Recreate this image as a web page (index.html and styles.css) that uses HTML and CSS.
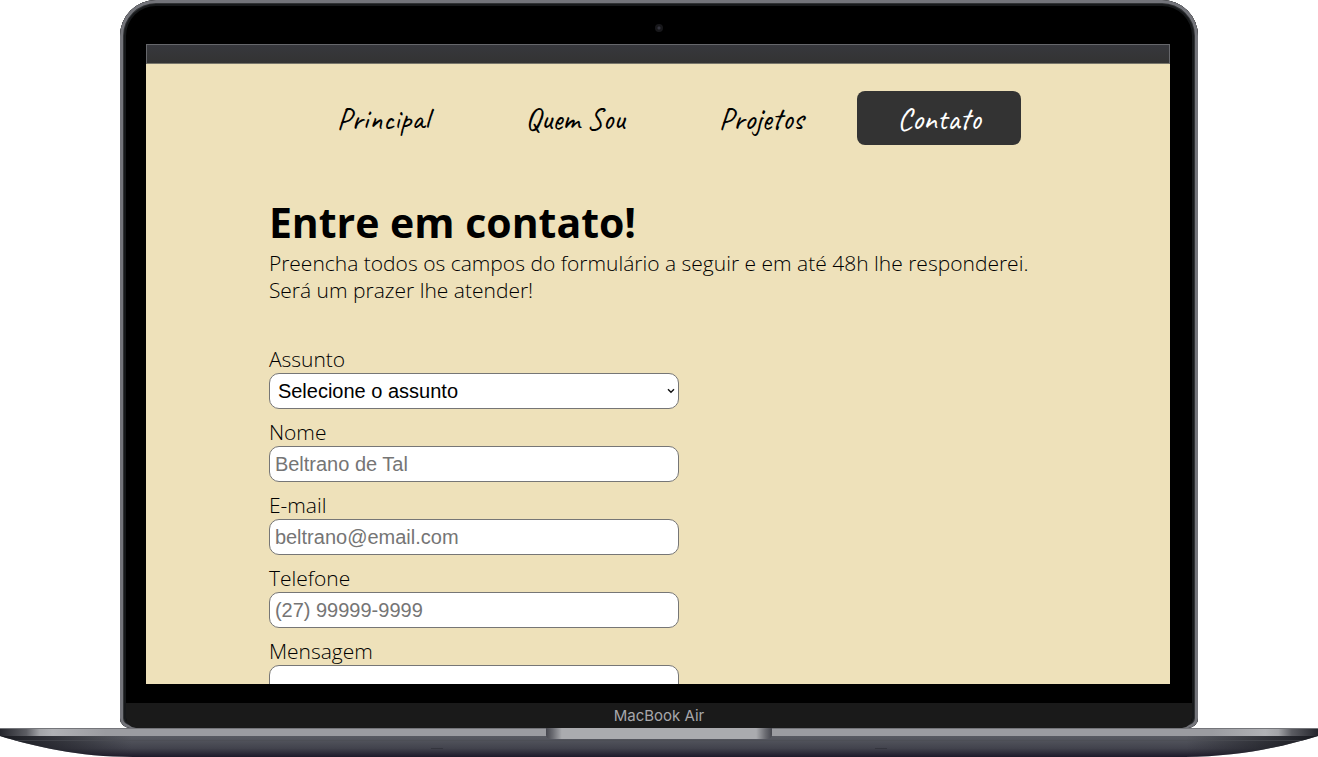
FILE: index.html
```html
<!DOCTYPE html>
<html lang="pt-BR">
<head>
<meta charset="utf-8">
<meta name="viewport" content="width=device-width, initial-scale=1">
<title>Contato</title>
<link rel="stylesheet" href="styles.css">
</head>
<body>
<div class="laptop">
  <div class="lid">
    <div class="camera"></div>
    <div class="screen">
      <div class="menubar"></div>
      <nav class="nav">
        <a class="nav-link" href="#principal">Principal</a>
        <a class="nav-link" href="#quem-sou">Quem Sou</a>
        <a class="nav-link" href="#projetos">Projetos</a>
        <a class="nav-link active" href="#contato" aria-current="page">Contato</a>
      </nav>
      <main class="content">
        <h1 class="title">Entre em contato!</h1>
        <p class="intro">Preencha todos os campos do formulário a seguir e em até 48h lhe responderei.<br>Será um prazer lhe atender!</p>
        <form class="form">
          <div class="field">
            <label for="assunto">Assunto</label>
            <div class="select-wrap">
              <select class="control select" id="assunto"><option>Selecione o assunto</option></select>
              <svg class="chevron" viewBox="0 0 8 6" aria-hidden="true"><path d="M1 1.2 4 4.2 7 1.2" fill="none" stroke="#111" stroke-width="1.4"/></svg>
            </div>
          </div>
          <div class="field">
            <label for="nome">Nome</label>
            <input class="control" id="nome" type="text" placeholder="Beltrano de Tal">
          </div>
          <div class="field">
            <label for="email">E-mail</label>
            <input class="control" id="email" type="email" placeholder="beltrano@email.com">
          </div>
          <div class="field">
            <label for="telefone">Telefone</label>
            <input class="control" id="telefone" type="tel" placeholder="(27) 99999-9999">
          </div>
          <div class="field">
            <label for="mensagem">Mensagem</label>
            <textarea class="control message" id="mensagem"></textarea>
          </div>
        </form>
      </main>
    </div>
    <div class="chin">MacBook Air</div>
  </div>
  <svg class="base" viewBox="0 0 1318 29" preserveAspectRatio="none" aria-hidden="true">
    <defs>
      <linearGradient id="under" x2="0" y2="1">
        <stop offset="0" stop-color="#66686d"/><stop offset=".35" stop-color="#55575f"/>
        <stop offset=".7" stop-color="#42434d"/><stop offset="1" stop-color="#1d1a2a"/>
      </linearGradient>
      <linearGradient id="edge">
        <stop offset="0" stop-color="#24252c"/><stop offset=".02" stop-color="#5c5d63"/>
        <stop offset=".03" stop-color="#a2a3a7"/><stop offset=".04" stop-color="#b0b1b5"/>
        <stop offset=".08" stop-color="#9b9ca1"/><stop offset=".92" stop-color="#9b9ca1"/>
        <stop offset=".96" stop-color="#b0b1b5"/><stop offset=".97" stop-color="#a2a3a7"/>
        <stop offset=".98" stop-color="#5c5d63"/><stop offset="1" stop-color="#24252c"/>
      </linearGradient>
      <linearGradient id="notch">
        <stop offset="0" stop-color="#45464e"/><stop offset=".03" stop-color="#6b6c72"/>
        <stop offset=".07" stop-color="#aaabaf"/><stop offset=".93" stop-color="#aaabaf"/>
        <stop offset=".97" stop-color="#6b6c72"/><stop offset="1" stop-color="#45464e"/>
      </linearGradient>
      <linearGradient id="tip">
        <stop offset="0" stop-color="#191a20"/><stop offset=".1" stop-color="#191a20" stop-opacity="0"/>
        <stop offset=".9" stop-color="#191a20" stop-opacity="0"/><stop offset="1" stop-color="#191a20"/>
      </linearGradient>
      <clipPath id="hull"><path d="M0 0H1318V8C1285 18 1240 29 1185 29H133C78 29 33 18 0 8Z"/></clipPath>
    </defs>
    <g clip-path="url(#hull)">
      <rect width="1318" height="29" fill="url(#under)"/>
      <rect y="8" width="1318" height="21" fill="url(#tip)"/>
      <rect width="1318" height="8" fill="url(#edge)"/>
      <path d="M0 .5H1318" stroke="#74757a"/>
      <path d="M0 12.5H1318" stroke="#4c4e54" opacity=".6"/>
      <path d="M546 0H772V7Q772 11 766 11H552Q546 11 546 7Z" fill="url(#notch)"/>
      <path d="M431 20.5h12M875 20.5h12" stroke="#34353e" fill="none"/>
    </g>
  </svg>
</div>
</body>
</html>
```
FILE: styles.css
```css
* { box-sizing: border-box; }
body { margin: 0; background: #fff; font-family: "Open Sans", sans-serif; color: #000; }
.laptop { display: flex; flex-direction: column; overflow: hidden; }
.lid {
  position: relative;
  margin: 0 120px;
  padding: 44px 28px 0 26px;
  background: #000;
  border-radius: 36px 36px 10px 10px;
  box-shadow: inset 0 0 0 3px #73747a, inset 0 0 0 4px #303234, inset 0 0 0 6px #16181a;
}
.camera {
  position: absolute;
  top: 24px;
  left: calc(50% - 4px);
  width: 8px;
  height: 8px;
  border-radius: 50%;
  background: radial-gradient(#34343e 0 1px, #17171a 2px);
}
.screen { aspect-ratio: 16 / 10; overflow: hidden; background: #eee1ba; }
.menubar {
  height: 20px;
  background: linear-gradient(#37383d, #333333);
  border: 1px solid #66676b;
  border-bottom-color: #77756a;
}
.nav {
  display: grid;
  grid-template-columns: 176px 180px 164px 164px;
  justify-content: center;
  gap: 14px;
  margin-top: 27px;
}
.nav-link {
  display: flex;
  align-items: center;
  justify-content: center;
  height: 54px;
  border-radius: 8px;
  color: #000;
  font-family: "Caveat", cursive;
  font-weight: 400;
  font-size: 31px;
  text-decoration: none;
}
.nav-link.active { background: #333; color: #fff; font-weight: 500; }
.content { padding: 50px 12% 0; }
.title { margin: 0; font-size: 41px; line-height: 55px; font-weight: 700; }
.intro { margin: 0; font-size: 21px; line-height: 27px; font-weight: 350; }
.form { display: flex; flex-direction: column; gap: 10px; margin-top: 42px; width: 410px; max-width: 100%; }
.field { display: flex; flex-direction: column; font-size: 21px; line-height: 27px; font-weight: 350; }
.control {
  display: block;
  width: 100%;
  height: 36px;
  padding: 0 5px;
  border: 1px solid #767676;
  border-radius: 10px;
  background: #fff;
  color: #000;
  font: 20px "Liberation Sans", Arial, sans-serif;
}
.control::placeholder { color: #757575; opacity: 1; }
.select-wrap { position: relative; }
.select { appearance: none; padding: 0 24px 0 8px; }
.chevron { position: absolute; top: 15px; right: 4px; width: 8px; height: 6px; pointer-events: none; }
.message { height: 120px; resize: none; }
.chin {
  margin: 19px -22px 0 -20px;
  height: 25px;
  border-radius: 0 0 10px 10px;
  background: #1a1a1a;
  color: #a7a7ab;
  font: 15px/26px Inter, sans-serif;
  text-align: center;
}
.base { display: block; width: 100%; height: 29px; }
```
